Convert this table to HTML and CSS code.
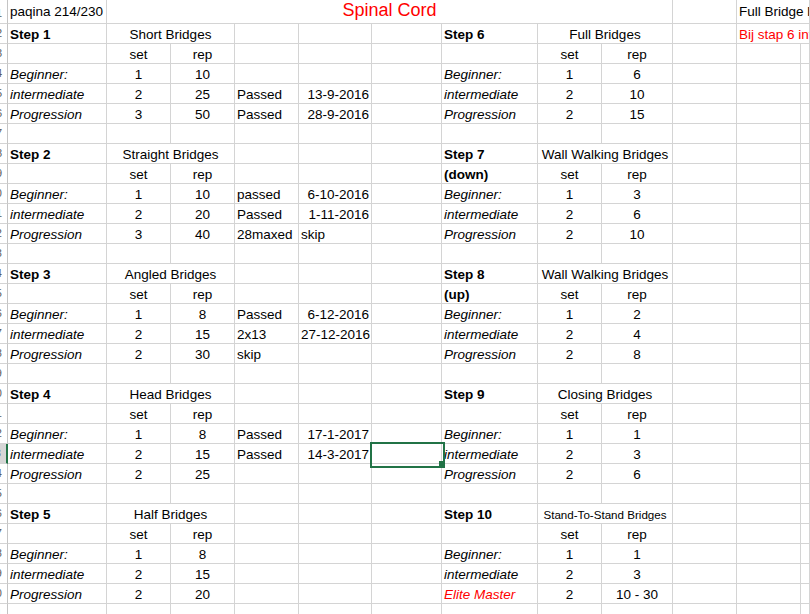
FILE: index.html
```html
<!DOCTYPE html>
<html lang="nl">
<head>
<meta charset="utf-8">
<title>Spinal Cord</title>
<link rel="stylesheet" href="styles.css">
</head>
<body>
<div class="sheet">
  <div class="r r0"><div class="c hd"><span>1</span></div><div class="c">paqina 214/230</div><div class="c s8 ct red title">Spinal Cord</div><div class="c"></div><div class="c s2">Full Bridge level uitvoering</div></div>
  <div class="r"><div class="c hd"><span>2</span></div><div class="c b">Step 1</div><div class="c s2 ct">Short Bridges</div><div class="c"></div><div class="c"></div><div class="c"></div><div class="c b">Step 6</div><div class="c s2 ct">Full Bridges</div><div class="c"></div><div class="c s2 red">Bij stap 6 intermediate</div></div>
  <div class="r"><div class="c hd"><span>3</span></div><div class="c"></div><div class="c ct">set</div><div class="c ct">rep</div><div class="c"></div><div class="c"></div><div class="c"></div><div class="c"></div><div class="c ct">set</div><div class="c ct">rep</div><div class="c"></div><div class="c"></div><div class="c"></div></div>
  <div class="r"><div class="c hd"><span>4</span></div><div class="c it">Beginner:</div><div class="c ct">1</div><div class="c ct">10</div><div class="c"></div><div class="c"></div><div class="c"></div><div class="c it">Beginner:</div><div class="c ct">1</div><div class="c ct">6</div><div class="c"></div><div class="c"></div><div class="c"></div></div>
  <div class="r"><div class="c hd"><span>5</span></div><div class="c it">intermediate</div><div class="c ct">2</div><div class="c ct">25</div><div class="c">Passed</div><div class="c rt">13-9-2016</div><div class="c"></div><div class="c it">intermediate</div><div class="c ct">2</div><div class="c ct">10</div><div class="c"></div><div class="c"></div><div class="c"></div></div>
  <div class="r"><div class="c hd"><span>6</span></div><div class="c it">Progression</div><div class="c ct">3</div><div class="c ct">50</div><div class="c">Passed</div><div class="c rt">28-9-2016</div><div class="c"></div><div class="c it">Progression</div><div class="c ct">2</div><div class="c ct">15</div><div class="c"></div><div class="c"></div><div class="c"></div></div>
  <div class="r"><div class="c hd"><span>7</span></div><div class="c"></div><div class="c"></div><div class="c"></div><div class="c"></div><div class="c"></div><div class="c"></div><div class="c"></div><div class="c"></div><div class="c"></div><div class="c"></div><div class="c"></div><div class="c"></div></div>
  <div class="r"><div class="c hd"><span>8</span></div><div class="c b">Step 2</div><div class="c s2 ct">Straight Bridges</div><div class="c"></div><div class="c"></div><div class="c"></div><div class="c b">Step 7</div><div class="c s2 ct">Wall Walking Bridges</div><div class="c"></div><div class="c"></div><div class="c"></div></div>
  <div class="r"><div class="c hd"><span>9</span></div><div class="c"></div><div class="c ct">set</div><div class="c ct">rep</div><div class="c"></div><div class="c"></div><div class="c"></div><div class="c b">(down)</div><div class="c ct">set</div><div class="c ct">rep</div><div class="c"></div><div class="c"></div><div class="c"></div></div>
  <div class="r"><div class="c hd"><span>10</span></div><div class="c it">Beginner:</div><div class="c ct">1</div><div class="c ct">10</div><div class="c">passed</div><div class="c rt">6-10-2016</div><div class="c"></div><div class="c it">Beginner:</div><div class="c ct">1</div><div class="c ct">3</div><div class="c"></div><div class="c"></div><div class="c"></div></div>
  <div class="r"><div class="c hd"><span>11</span></div><div class="c it">intermediate</div><div class="c ct">2</div><div class="c ct">20</div><div class="c">Passed</div><div class="c rt">1-11-2016</div><div class="c"></div><div class="c it">intermediate</div><div class="c ct">2</div><div class="c ct">6</div><div class="c"></div><div class="c"></div><div class="c"></div></div>
  <div class="r"><div class="c hd"><span>12</span></div><div class="c it">Progression</div><div class="c ct">3</div><div class="c ct">40</div><div class="c">28maxed</div><div class="c">skip</div><div class="c"></div><div class="c it">Progression</div><div class="c ct">2</div><div class="c ct">10</div><div class="c"></div><div class="c"></div><div class="c"></div></div>
  <div class="r"><div class="c hd"><span>13</span></div><div class="c"></div><div class="c"></div><div class="c"></div><div class="c"></div><div class="c"></div><div class="c"></div><div class="c"></div><div class="c"></div><div class="c"></div><div class="c"></div><div class="c"></div><div class="c"></div></div>
  <div class="r"><div class="c hd"><span>14</span></div><div class="c b">Step 3</div><div class="c s2 ct">Angled Bridges</div><div class="c"></div><div class="c"></div><div class="c"></div><div class="c b">Step 8</div><div class="c s2 ct">Wall Walking Bridges</div><div class="c"></div><div class="c"></div><div class="c"></div></div>
  <div class="r"><div class="c hd"><span>15</span></div><div class="c"></div><div class="c ct">set</div><div class="c ct">rep</div><div class="c"></div><div class="c"></div><div class="c"></div><div class="c b">(up)</div><div class="c ct">set</div><div class="c ct">rep</div><div class="c"></div><div class="c"></div><div class="c"></div></div>
  <div class="r"><div class="c hd"><span>16</span></div><div class="c it">Beginner:</div><div class="c ct">1</div><div class="c ct">8</div><div class="c">Passed</div><div class="c rt">6-12-2016</div><div class="c"></div><div class="c it">Beginner:</div><div class="c ct">1</div><div class="c ct">2</div><div class="c"></div><div class="c"></div><div class="c"></div></div>
  <div class="r"><div class="c hd"><span>17</span></div><div class="c it">intermediate</div><div class="c ct">2</div><div class="c ct">15</div><div class="c">2x13</div><div class="c rt">27-12-2016</div><div class="c"></div><div class="c it">intermediate</div><div class="c ct">2</div><div class="c ct">4</div><div class="c"></div><div class="c"></div><div class="c"></div></div>
  <div class="r"><div class="c hd"><span>18</span></div><div class="c it">Progression</div><div class="c ct">2</div><div class="c ct">30</div><div class="c">skip</div><div class="c"></div><div class="c"></div><div class="c it">Progression</div><div class="c ct">2</div><div class="c ct">8</div><div class="c"></div><div class="c"></div><div class="c"></div></div>
  <div class="r"><div class="c hd"><span>19</span></div><div class="c"></div><div class="c"></div><div class="c"></div><div class="c"></div><div class="c"></div><div class="c"></div><div class="c"></div><div class="c"></div><div class="c"></div><div class="c"></div><div class="c"></div><div class="c"></div></div>
  <div class="r"><div class="c hd"><span>20</span></div><div class="c b">Step 4</div><div class="c s2 ct">Head Bridges</div><div class="c"></div><div class="c"></div><div class="c"></div><div class="c b">Step 9</div><div class="c s2 ct">Closing Bridges</div><div class="c"></div><div class="c"></div><div class="c"></div></div>
  <div class="r"><div class="c hd"><span>21</span></div><div class="c"></div><div class="c ct">set</div><div class="c ct">rep</div><div class="c"></div><div class="c"></div><div class="c"></div><div class="c"></div><div class="c ct">set</div><div class="c ct">rep</div><div class="c"></div><div class="c"></div><div class="c"></div></div>
  <div class="r"><div class="c hd"><span>22</span></div><div class="c it">Beginner:</div><div class="c ct">1</div><div class="c ct">8</div><div class="c">Passed</div><div class="c rt">17-1-2017</div><div class="c"></div><div class="c it">Beginner:</div><div class="c ct">1</div><div class="c ct">1</div><div class="c"></div><div class="c"></div><div class="c"></div></div>
  <div class="r"><div class="c hd act"><span>23</span></div><div class="c it">intermediate</div><div class="c ct">2</div><div class="c ct">15</div><div class="c">Passed</div><div class="c rt">14-3-2017</div><div class="c sel"></div><div class="c it">intermediate</div><div class="c ct">2</div><div class="c ct">3</div><div class="c"></div><div class="c"></div><div class="c"></div></div>
  <div class="r"><div class="c hd"><span>24</span></div><div class="c it">Progression</div><div class="c ct">2</div><div class="c ct">25</div><div class="c"></div><div class="c"></div><div class="c"></div><div class="c it">Progression</div><div class="c ct">2</div><div class="c ct">6</div><div class="c"></div><div class="c"></div><div class="c"></div></div>
  <div class="r"><div class="c hd"><span>25</span></div><div class="c"></div><div class="c"></div><div class="c"></div><div class="c"></div><div class="c"></div><div class="c"></div><div class="c"></div><div class="c"></div><div class="c"></div><div class="c"></div><div class="c"></div><div class="c"></div></div>
  <div class="r"><div class="c hd"><span>26</span></div><div class="c b">Step 5</div><div class="c s2 ct">Half Bridges</div><div class="c"></div><div class="c"></div><div class="c"></div><div class="c b">Step 10</div><div class="c s2 ct sm">Stand-To-Stand Bridges</div><div class="c"></div><div class="c"></div><div class="c"></div></div>
  <div class="r"><div class="c hd"><span>27</span></div><div class="c"></div><div class="c ct">set</div><div class="c ct">rep</div><div class="c"></div><div class="c"></div><div class="c"></div><div class="c"></div><div class="c ct">set</div><div class="c ct">rep</div><div class="c"></div><div class="c"></div><div class="c"></div></div>
  <div class="r"><div class="c hd"><span>28</span></div><div class="c it">Beginner:</div><div class="c ct">1</div><div class="c ct">8</div><div class="c"></div><div class="c"></div><div class="c"></div><div class="c it">Beginner:</div><div class="c ct">1</div><div class="c ct">1</div><div class="c"></div><div class="c"></div><div class="c"></div></div>
  <div class="r"><div class="c hd"><span>29</span></div><div class="c it">intermediate</div><div class="c ct">2</div><div class="c ct">15</div><div class="c"></div><div class="c"></div><div class="c"></div><div class="c it">intermediate</div><div class="c ct">2</div><div class="c ct">3</div><div class="c"></div><div class="c"></div><div class="c"></div></div>
  <div class="r"><div class="c hd"><span>30</span></div><div class="c it">Progression</div><div class="c ct">2</div><div class="c ct">20</div><div class="c"></div><div class="c"></div><div class="c"></div><div class="c it red">Elite Master</div><div class="c ct">2</div><div class="c ct">10 - 30</div><div class="c"></div><div class="c"></div><div class="c"></div></div>
  <div class="r"><div class="c hd"><span>31</span></div><div class="c"></div><div class="c"></div><div class="c"></div><div class="c"></div><div class="c"></div><div class="c"></div><div class="c"></div><div class="c"></div><div class="c"></div><div class="c"></div><div class="c"></div><div class="c"></div></div>
</div>
</body>
</html>
```

FILE: styles.css
```css
* { box-sizing: border-box; }
html, body { margin: 0; padding: 0; background: #fff; }
body {
  overflow: hidden;
  font-family: "Liberation Sans", Arial, sans-serif;
  font-size: 13.5px;
  color: #000;
}
.sheet { width: 810px; height: 614px; overflow: hidden; }
.r {
  display: grid;
  grid-template-columns: 8px 99px 64px 64px 64px 73px 70px 96px 64px 71px 64px 64px 1fr;
  height: 20px;
}
.r0 { height: 24px; }
.c {
  min-width: 0;
  border-right: 1px solid #d4d4d4;
  border-bottom: 1px solid #d4d4d4;
  padding: 3px 2px 0 2px;
  line-height: 15px;
  white-space: nowrap;
  overflow: hidden;
}
.r0 .c { padding-top: 4px; }
.r0 .title { padding-top: 0; font-size: 18px; line-height: 21px; }
.s2 { grid-column: span 2; }
.s8 { grid-column: span 8; }
.ct { text-align: center; }
.rt { text-align: right; }
.b { font-weight: bold; }
.it { font-style: italic; }
.red { color: #ff0000; }
.sm { font-size: 11.6px; }
.hd {
  padding: 0;
  display: flex;
  justify-content: flex-end;
  font-size: 11px;
  line-height: 19px;
  color: #5a5a5a;
  border-right-color: #c4c4c4;
}
.hd span { margin-right: 5px; }
.hd.act { background: #d6d6d6; border-right: 2px solid #217346; }
.sel { position: relative; overflow: visible; }
.sel::after {
  content: "";
  position: absolute;
  left: -2px;
  top: -2px;
  width: 71px;
  height: 22px;
  border: 2px solid #217346;
}
.sel::before {
  content: "";
  position: absolute;
  left: 67px;
  top: 17px;
  width: 5px;
  height: 5px;
  background: #217346;
  z-index: 1;
}
```
